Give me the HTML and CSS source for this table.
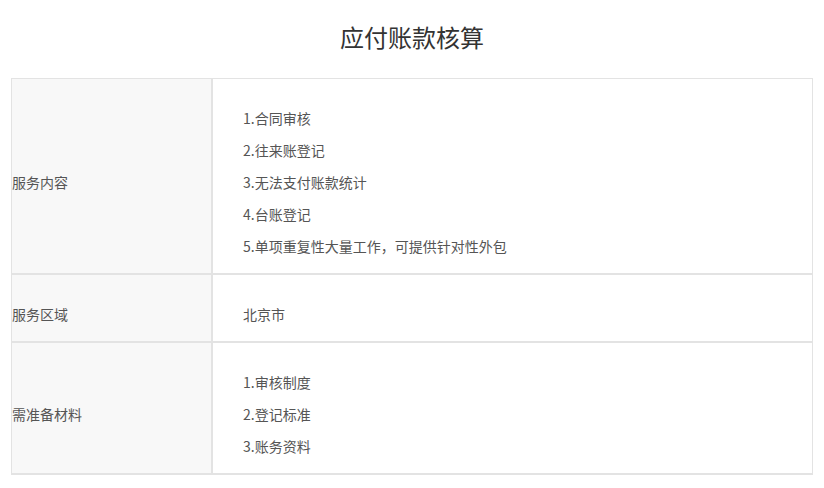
FILE: index.html
```html
<!DOCTYPE html>
<html lang="zh-CN">
<head>
<meta charset="utf-8">
<title>应付账款核算</title>
<link rel="stylesheet" href="styles.css">
</head>
<body>
<div class="page">
  <h2 class="title">应付账款核算</h2>
  <table class="info">
    <tbody>
      <tr>
        <td class="label">服务内容</td>
        <td class="value">
          <p>1.合同审核</p>
          <p>2.往来账登记</p>
          <p>3.无法支付账款统计</p>
          <p>4.台账登记</p>
          <p>5.单项重复性大量工作，可提供针对性外包</p>
        </td>
      </tr>
      <tr>
        <td class="label">服务区域</td>
        <td class="value"><p>北京市</p></td>
      </tr>
      <tr>
        <td class="label">需准备材料</td>
        <td class="value">
          <p>1.审核制度</p>
          <p>2.登记标准</p>
          <p>3.账务资料</p>
        </td>
      </tr>
    </tbody>
  </table>
</div>
</body>
</html>
```

FILE: styles.css
```css
html, body {
  margin: 0;
  padding: 0;
  background: #fff;
}
body {
  font-family: "Microsoft YaHei", "Noto Sans CJK SC", "Noto Sans", sans-serif;
  color: #555;
}
.page {
  padding: 0 11px;
}
.title {
  margin: 0 0 24px;
  padding-top: 20px;
  font-size: 24px;
  line-height: 34px;
  font-weight: normal;
  color: #333;
  text-align: center;
}
.info {
  width: 802px;
  border-collapse: separate;
  border-spacing: 0;
  font-size: 14px;
}
.info td {
  border: 1px solid #e3e3e3;
  padding: 23px 0 11px;
  vertical-align: middle;
}
.info tr:last-child td {
  border-bottom-width: 2px;
}
.info td.label {
  width: 199px;
  background: #f8f8f8;
  padding-left: 0;
}
.info td.value {
  padding-left: 30px;
  background: #fff;
}
.info p {
  margin: 0;
  line-height: 32px;
}
```
